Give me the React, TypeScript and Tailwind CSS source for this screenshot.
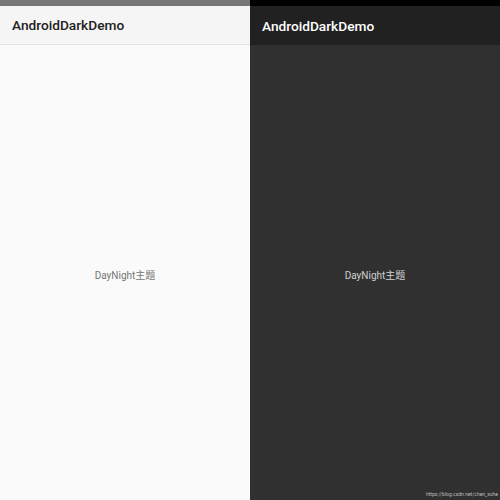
export default function App() {
  return (
    <div className="flex w-[500px] h-[500px] overflow-hidden" style={{ fontFamily: 'Roboto, "Noto Sans CJK SC", sans-serif' }}>
      {/* 浅色模式 */}
      <div className="flex flex-col w-[250px] h-full bg-[#fafafa]">
        <div className="h-[6px] bg-[#777777] flex-shrink-0" />
        <div className="h-[39px] bg-[#f5f5f5] border-b border-[#e2e2e2] flex items-center px-3 pt-[1px] flex-shrink-0">
          <span className="text-[13.7px] font-medium text-[#212121]">AndroidDarkDemo</span>
        </div>
        <div className="flex-1 flex items-center justify-center pt-[6px]">
          <span className="text-[10px] text-[#757575]">DayNight主题</span>
        </div>
      </div>
      {/* 深色模式 */}
      <div className="relative flex flex-col w-[250px] h-full bg-[#303030]">
        <div className="h-[6px] bg-black flex-shrink-0" />
        <div className="h-[39px] bg-[#212121] flex items-center px-3 pt-[1px] flex-shrink-0">
          <span className="text-[13.7px] font-medium text-white">AndroidDarkDemo</span>
        </div>
        <div className="flex-1 flex items-center justify-center pt-[6px]">
          <span className="text-[10px] text-[#d0d0d0]">DayNight主题</span>
        </div>
        <span className="absolute right-[2px] bottom-[3px] text-[5px] text-[#bdbdbd] leading-none">https://blog.csdn.net/chen_xuhe</span>
      </div>
    </div>
  )
}
